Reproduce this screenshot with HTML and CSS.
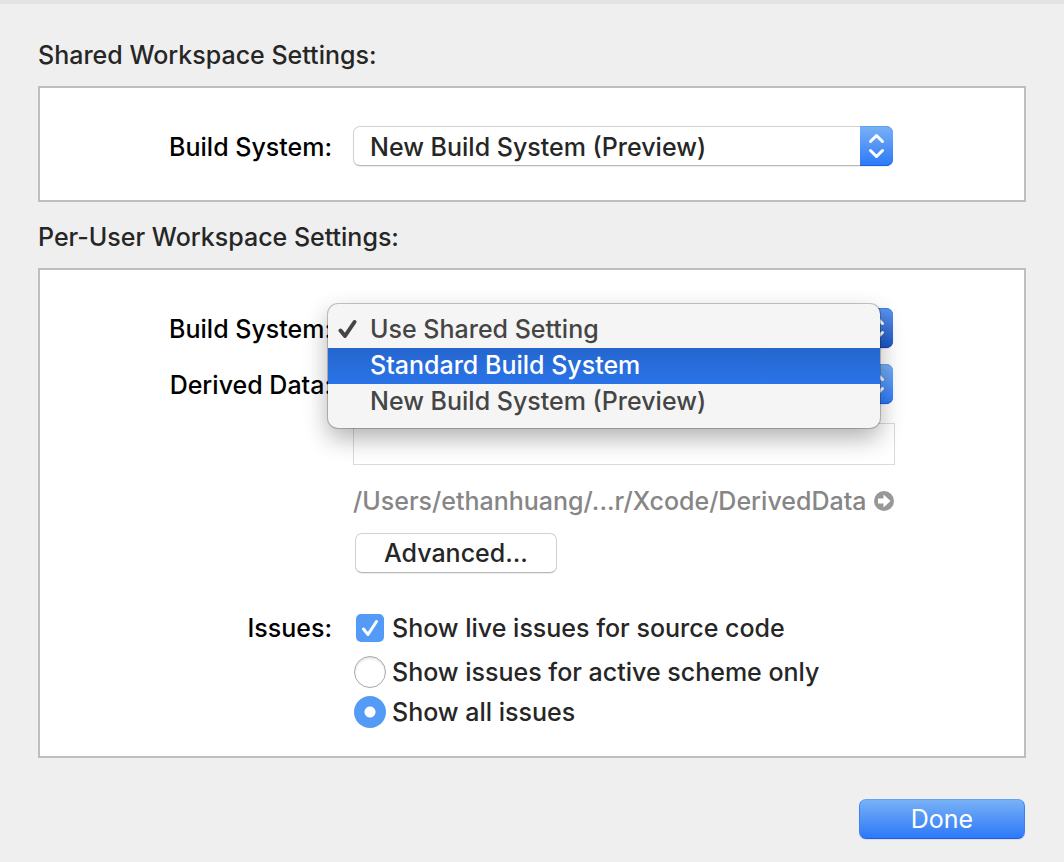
FILE: index.html
```html
<!DOCTYPE html>
<html lang="en">
<head>
<meta charset="utf-8">
<meta name="viewport" content="width=device-width, initial-scale=1">
<title>Workspace Settings</title>
<link rel="stylesheet" href="styles.css">
</head>
<body>
<form class="sheet">
  <section class="group">
    <h2 class="group-title">Shared Workspace Settings:</h2>
    <div class="panel">
      <div class="row">
        <label class="row-label" for="shared-build">Build System:</label>
        <div class="popup">
          <select class="popup-select" id="shared-build">
            <option>New Build System (Preview)</option>
          </select>
          <span class="stepper"><svg class="stepper-icon" viewBox="0 0 33 40" aria-hidden="true"><path d="M10.500 15.500 16.500 9.500 22.500 15.500M10.500 24.500 16.500 30.500 22.500 24.500"/></svg></span>
        </div>
      </div>
    </div>
  </section>

  <section class="group">
    <h2 class="group-title">Per-User Workspace Settings:</h2>
    <div class="panel panel-user">
      <div class="row">
        <label class="row-label" for="user-build">Build System:</label>
        <div class="popup">
          <select class="popup-select" id="user-build">
            <option>Use Shared Setting</option>
          </select>
          <span class="stepper stepper-pressed"><svg class="stepper-icon" viewBox="0 0 33 40" aria-hidden="true"><path d="M10.500 15.500 16.500 9.500 22.500 15.500M10.500 24.500 16.500 30.500 22.500 24.500"/></svg></span>
          <div class="menu" role="listbox" aria-label="Build System">
            <button class="menu-item" type="button" role="option" aria-selected="true">
              <svg class="menu-check" viewBox="0 0 20 20" aria-hidden="true"><path d="M2.500 11.500 7 17 16.500 3"/></svg>
              Use Shared Setting
            </button>
            <button class="menu-item menu-item-active" type="button" role="option" aria-selected="false">Standard Build System</button>
            <button class="menu-item" type="button" role="option" aria-selected="false">New Build System (Preview)</button>
          </div>
        </div>
      </div>
      <div class="row row-derived">
        <label class="row-label" for="derived">Derived Data:</label>
        <div class="location">
          <div class="popup">
            <select class="popup-select" id="derived"><option></option></select>
            <span class="stepper"><svg class="stepper-icon" viewBox="0 0 33 40" aria-hidden="true"><path d="M10.500 15.500 16.500 9.500 22.500 15.500M10.500 24.500 16.500 30.500 22.500 24.500"/></svg></span>
          </div>
          <input class="path-field" type="text" aria-label="Derived Data path">
          <div class="path">
            <span>/Users/ethanhuang/...r/Xcode/DerivedData</span>
            <button class="reveal" type="button" aria-label="Reveal in Finder">
              <svg class="reveal-icon" viewBox="0 0 20 20" aria-hidden="true"><circle cx="10" cy="10" r="10"/><path d="M4 7.500h5.500V3.500L16.500 10l-7 6.500v-4H4z"/></svg>
            </button>
          </div>
          <button class="button advanced" type="button">Advanced...</button>
        </div>
      </div>
      <div class="row row-issues" role="group" aria-labelledby="issues">
        <span class="row-label" id="issues">Issues:</span>
        <div class="choices">
          <label class="choice">
            <span class="mark"><input class="checkbox" type="checkbox" checked><svg class="tick" viewBox="0 0 28 28" aria-hidden="true"><path d="M7.500 15 12 20.500 20.500 7.500"/></svg></span>
            Show live issues for source code
          </label>
          <label class="choice choice-first-radio">
            <span class="mark"><input class="radio" type="radio" name="issues"></span>
            Show issues for active scheme only
          </label>
          <label class="choice choice-next-radio">
            <span class="mark"><input class="radio" type="radio" name="issues" checked></span>
            Show all issues
          </label>
        </div>
      </div>
    </div>
  </section>

  <footer class="actions">
    <button class="button done" type="submit">Done</button>
  </footer>
</form>
</body>
</html>
```
FILE: styles.css
```css
* {
  box-sizing: border-box;
}

body {
  margin: 0;
  background: #efefef;
  color: #262626;
  font: 450 25px/32px Inter, "Liberation Sans", sans-serif;
}

button,
input,
select {
  margin: 0;
  font: inherit;
  color: inherit;
}

.sheet {
  padding: 35px 38px 23px;
  border-top: 4px solid #e3e3e3;
}

.group {
  margin-bottom: 19px;
}

.group-title {
  margin: 0 0 15px;
  font-size: inherit;
  font-weight: inherit;
}

.panel {
  padding: 38px 0 34px;
  border: 2px solid #bebebe;
  background: #fff;
}

.panel-user {
  padding-bottom: 28px;
}

.row {
  display: grid;
  grid-template-columns: minmax(0, 292px) minmax(0, 542px);
  column-gap: 21px;
}

.row-derived {
  margin-top: 16px;
}

.row-issues {
  margin-top: 39px;
}

.row-label {
  padding: 5px 0 3px;
  color: #000;
  text-align: right;
  white-space: nowrap;
}

.row-issues .row-label {
  padding: 0;
}

.popup {
  position: relative;
  height: 40px;
  margin-right: 2px;
}

.popup-select {
  appearance: none;
  width: 100%;
  height: 40px;
  padding: 1px 40px 0 16px;
  border: 1px solid #d2d2d2;
  border-bottom-color: #b8b8b8;
  border-radius: 7px;
  background: #fff;
  box-shadow: 0 1px 1px #00000014;
}

.stepper {
  position: absolute;
  top: 0;
  right: 0;
  width: 33px;
  height: 40px;
  border-radius: 0 7px 7px 0;
  background: linear-gradient(#78b1f6, #2c79f8);
  box-shadow: inset 0 1px #64a1ec, inset 0 -1px #1c5df0;
  pointer-events: none;
}

.stepper-pressed {
  background: linear-gradient(#5c96f0, #1c57c6);
  box-shadow: inset 0 1px #3f7de6, inset 0 -1px #1043c0;
}

.stepper-icon {
  display: block;
  fill: none;
  stroke: #fff;
  stroke-width: 3;
  stroke-linecap: round;
  stroke-linejoin: round;
}

.menu {
  position: absolute;
  z-index: 1;
  top: -4px;
  right: 13px;
  left: -25px;
  padding: 8px 0;
  border-radius: 10px;
  background: #f5f5f5;
  box-shadow: 0 0 0 1px #00000038, 0 10px 24px #00000050;
}

.menu-item {
  position: relative;
  display: block;
  width: 100%;
  height: 36px;
  padding: 0 42px 2px;
  border: 0;
  background: none;
  color: #454545;
  text-align: left;
  white-space: nowrap;
}

.menu-item-active {
  background: linear-gradient(#2566ce, #2a74e8);
  color: #fff;
  font-weight: 500;
}

.menu-check {
  position: absolute;
  top: 7px;
  left: 10px;
  width: 20px;
  height: 20px;
  fill: none;
  stroke: #454545;
  stroke-width: 4;
  stroke-linecap: round;
  stroke-linejoin: round;
}

.path-field {
  display: block;
  width: 100%;
  height: 42px;
  margin-top: 19px;
  padding: 0 8px;
  border: 1px solid #dadada;
  background: #fff;
}

.path {
  display: flex;
  align-items: center;
  gap: 8px;
  margin: 20px 0 16px;
  color: #868686;
  white-space: nowrap;
}

.reveal {
  display: block;
  padding: 0;
  border: 0;
  background: none;
}

.reveal-icon {
  display: block;
  width: 20px;
  height: 20px;
  fill: #989898;
}

.reveal-icon path {
  fill: #fff;
}

.button {
  display: block;
  height: 40px;
  padding: 0;
  border-radius: 7px;
}

.advanced {
  width: 202px;
  margin-left: 2px;
  border: 1px solid #d2d2d2;
  border-bottom-color: #b8b8b8;
  background: #fff;
  box-shadow: 0 1px 1px #00000014;
}

.choices {
  padding-left: 1px;
}

.choice {
  display: flex;
  align-items: center;
  gap: 6px;
  white-space: nowrap;
}

.choice-first-radio {
  margin-top: 12px;
}

.choice-next-radio {
  margin-top: 8px;
}

.mark {
  position: relative;
  display: grid;
  place-items: center;
  width: 32px;
  height: 32px;
}

.checkbox {
  appearance: none;
  width: 28px;
  height: 28px;
  border-radius: 5px;
  background: #549af7;
}

.tick {
  position: absolute;
  top: 2px;
  left: 2px;
  width: 28px;
  height: 28px;
  fill: none;
  stroke: #fff;
  stroke-width: 3;
  stroke-linecap: round;
  stroke-linejoin: round;
  pointer-events: none;
}

.radio {
  appearance: none;
  width: 32px;
  height: 32px;
  border: 1px solid #a8a8a8;
  border-radius: 50%;
  background: #fff;
  box-shadow: inset 0 2px 2px #00000018;
}

.radio:checked {
  border: 0;
  background: radial-gradient(circle, #fff 5px, #549af7 6px);
  box-shadow: none;
}

.actions {
  display: flex;
  justify-content: flex-end;
  margin: 41px 1px 0;
}

.done {
  width: 166px;
  border: 1px solid #3f83f3;
  border-top-color: #64a1ec;
  border-bottom-color: #1c5df0;
  background: linear-gradient(#78b1f6, #2c79f8);
  box-shadow: 0 1px 1px #00000014;
  color: #fff;
  font-weight: 400;
}
```
